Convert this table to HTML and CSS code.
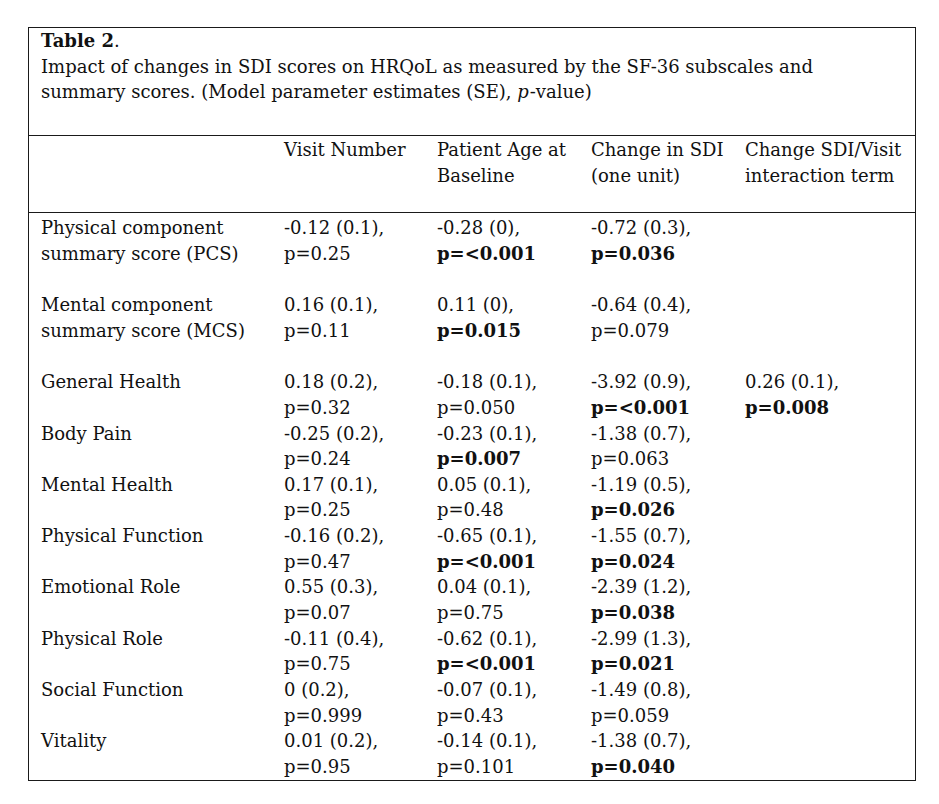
FILE: index.html
```html
<!DOCTYPE html>
<html lang="en">
<head>
<meta charset="utf-8">
<title>Table 2</title>
<link rel="stylesheet" href="styles.css">
</head>
<body>
<div class="frame">
  <div class="caption">
    <div class="caption-title"><b>Table 2</b>.</div>
    <div class="caption-text">Impact of changes in SDI scores on HRQoL as measured by the SF-36 subscales and summary scores. (Model parameter estimates (SE), <span class="it">p</span>-value)</div>
  </div>
  <table class="data">
    <colgroup>
      <col class="c1"><col class="c2"><col class="c3"><col class="c4"><col class="c5">
    </colgroup>
    <thead>
      <tr>
        <th></th>
        <th>Visit Number</th>
        <th>Patient Age at<br>Baseline</th>
        <th>Change in SDI<br>(one unit)</th>
        <th>Change SDI/Visit<br>interaction term</th>
      </tr>
    </thead>
    <tbody>
      <tr class="first spaced">
        <td>Physical component summary score (PCS)</td>
        <td>-0.12 (0.1),<br>p=0.25</td>
        <td>-0.28 (0),<br><b>p=&lt;0.001</b></td>
        <td>-0.72 (0.3),<br><b>p=0.036</b></td>
        <td></td>
      </tr>
      <tr class="spaced">
        <td>Mental component summary score (MCS)</td>
        <td>0.16 (0.1),<br>p=0.11</td>
        <td>0.11 (0),<br><b>p=0.015</b></td>
        <td>-0.64 (0.4),<br>p=0.079</td>
        <td></td>
      </tr>
      <tr>
        <td>General Health</td>
        <td>0.18 (0.2),<br>p=0.32</td>
        <td>-0.18 (0.1),<br>p=0.050</td>
        <td>-3.92 (0.9),<br><b>p=&lt;0.001</b></td>
        <td>0.26 (0.1),<br><b>p=0.008</b></td>
      </tr>
      <tr>
        <td>Body Pain</td>
        <td>-0.25 (0.2),<br>p=0.24</td>
        <td>-0.23 (0.1),<br><b>p=0.007</b></td>
        <td>-1.38 (0.7),<br>p=0.063</td>
        <td></td>
      </tr>
      <tr>
        <td>Mental Health</td>
        <td>0.17 (0.1),<br>p=0.25</td>
        <td>0.05 (0.1),<br>p=0.48</td>
        <td>-1.19 (0.5),<br><b>p=0.026</b></td>
        <td></td>
      </tr>
      <tr>
        <td>Physical Function</td>
        <td>-0.16 (0.2),<br>p=0.47</td>
        <td>-0.65 (0.1),<br><b>p=&lt;0.001</b></td>
        <td>-1.55 (0.7),<br><b>p=0.024</b></td>
        <td></td>
      </tr>
      <tr>
        <td>Emotional Role</td>
        <td>0.55 (0.3),<br>p=0.07</td>
        <td>0.04 (0.1),<br>p=0.75</td>
        <td>-2.39 (1.2),<br><b>p=0.038</b></td>
        <td></td>
      </tr>
      <tr>
        <td>Physical Role</td>
        <td>-0.11 (0.4),<br>p=0.75</td>
        <td>-0.62 (0.1),<br><b>p=&lt;0.001</b></td>
        <td>-2.99 (1.3),<br><b>p=0.021</b></td>
        <td></td>
      </tr>
      <tr>
        <td>Social Function</td>
        <td>0 (0.2),<br>p=0.999</td>
        <td>-0.07 (0.1),<br>p=0.43</td>
        <td>-1.49 (0.8),<br>p=0.059</td>
        <td></td>
      </tr>
      <tr class="last">
        <td>Vitality</td>
        <td>0.01 (0.2),<br>p=0.95</td>
        <td>-0.14 (0.1),<br>p=0.101</td>
        <td>-1.38 (0.7),<br><b>p=0.040</b></td>
        <td></td>
      </tr>
    </tbody>
  </table>
</div>
</body>
</html>
```
FILE: styles.css
```css
html, body {
  margin: 0;
  padding: 0;
  background: #ffffff;
}

body {
  font-family: "DejaVu Serif", "Liberation Serif", serif;
  font-size: 18px;
  line-height: 25.65px;
  color: #111111;
}

.frame {
  box-sizing: border-box;
  width: 888px;
  margin: 27px 0 0 28px;
  border: 1px solid #1a1a1a;
}

.caption {
  padding: 0 12px 30px 12px;
  border-bottom: 1px solid #1a1a1a;
}

.caption-text {
  max-width: 800px;
}

.caption .it {
  font-style: italic;
  padding-right: 1px;
}

.caption b {
  font-weight: bold;
}

.data {
  width: 100%;
  border-collapse: collapse;
  table-layout: fixed;
}

.c1 { width: 243px; }
.c2 { width: 153px; }
.c3 { width: 154px; }
.c4 { width: 154px; }
.c5 { width: 182px; }

.data th {
  font-weight: normal;
  text-align: left;
  vertical-align: top;
  white-space: nowrap;
  padding: 1px 0 24px 12px;
  border-bottom: 1px solid #1a1a1a;
}

.data td {
  text-align: left;
  vertical-align: top;
  padding: 0 4px 0 12px;
}

.data tr.first td {
  padding-top: 2px;
}

.data tr.spaced td {
  padding-bottom: 25.65px;
}

.data b {
  font-weight: bold;
}
```
